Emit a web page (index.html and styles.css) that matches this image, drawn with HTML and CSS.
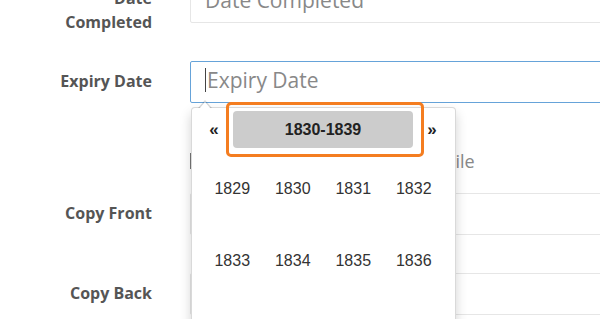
FILE: index.html
```html
<!DOCTYPE html>
<html lang="en">
<head>
  <meta charset="UTF-8">
  <meta name="viewport" content="width=device-width, initial-scale=1.0">
  <title>Expiry date picker</title>
  <link rel="stylesheet" href="styles.css">
</head>
<body>
<form class="form">
  <div class="row">
    <label class="label two-line">Date<br>Completed</label>
    <div class="field"><span class="ph">Date Completed</span></div>
  </div>
  <div class="row">
    <label class="label">Expiry Date</label>
    <div class="field focus">
      <span class="caret"></span><span class="ph">Expiry Date</span>
      <div class="picker">
        <div class="head">
          <span class="nav">&laquo;</span>
          <span class="switch">1830-1839</span>
          <span class="nav">&raquo;</span>
        </div>
        <div class="years">
          <span>1829</span><span>1830</span><span>1831</span><span>1832</span>
          <span>1833</span><span>1834</span><span>1835</span><span>1836</span>
        </div>
      </div>
    </div>
  </div>
  <div class="row file-row">
    <span></span>
    <div class="file"><span class="file-btn"></span><span class="file-text">Upload File</span></div>
  </div>
  <div class="row">
    <label class="label">Copy Front</label>
    <div class="field"></div>
  </div>
  <div class="row">
    <label class="label">Copy Back</label>
    <div class="field"></div>
  </div>
</form>
</body>
</html>
```

FILE: styles.css
```css
html,body{
  margin: 0;
  background: #fff;
  overflow: hidden;
  height: 319px;
}
.form{
  width: 760px;
  padding-top: 1px;
  margin-top: -20px;
  font-family: "Open Sans", "Liberation Sans", sans-serif;
}
.row{
  display: grid;
  grid-template-columns: 152px 1fr;
  grid-template-rows: 42px;
  column-gap: 38px;
  margin-bottom: 38px;
}
.label{
  text-align: right;
  font-weight: bold;
  font-size: 16px;
  line-height: 24px;
  color: #555;
  padding-top: 8px;
  white-space: nowrap;
}
.two-line{
  padding-top: 5px;
}
.field{
  position: relative;
  height: 42px;
  box-sizing: border-box;
  border: 1px solid #e6e6e6;
  border-radius: 2px;
  padding: 0 14px;
  display: flex;
  align-items: center;
  font-size: 21px;
  color: #888;
}
.field.focus{
  border-color: #66a3d9;
}
.ph{
  margin-top: -4px;
}
.caret{
  width: 1px;
  height: 24px;
  background: #444;
  margin-right: 1px;
  margin-top: -4px;
}
.file-row{
  grid-template-rows: 52px;
  margin-bottom: 0;
}
.file{
  display: flex;
  align-items: center;
  padding-top: 10px;
  height: 20px;
  font-size: 18px;
  color: #888;
}
.file-btn{
  width: 1px;
  height: 16px;
  background: #777;
  margin-right: 190px;
}
/* dropdown */
.picker{
  position: absolute;
  left: 0;
  top: 45px;
  width: 265px;
  height: 240px;
  box-sizing: border-box;
  background: #fff;
  border: 1px solid rgba(0,0,0,.15);
  border-radius: 4px;
  box-shadow: 0 6px 12px rgba(0,0,0,.18);
  padding: 3px 11px 0 10px;
  font-family: "Liberation Sans", Arial, sans-serif;
  color: #333;
  z-index: 2;
}
.picker::before{
  content: "";
  position: absolute;
  left: 6px;
  top: -8px;
  border-left: 7px solid transparent;
  border-right: 7px solid transparent;
  border-bottom: 8px solid rgba(0,0,0,.15);
}
.picker::after{
  content: "";
  position: absolute;
  left: 7px;
  top: -6px;
  border-left: 6px solid transparent;
  border-right: 6px solid transparent;
  border-bottom: 7px solid #fff;
}
.head{
  display: flex;
  align-items: center;
  gap: 7px;
  height: 37px;
  font-weight: bold;
  font-size: 16px;
}
.nav{
  width: 24px;
  text-align: center;
  font-size: 17px;
  color: #222;
}
.switch{
  position: relative;
  width: 180px;
  height: 37px;
  line-height: 37px;
  text-align: center;
  background: #ccc;
  border-radius: 4px;
  color: #222;
}
.switch::after{
  content: "";
  position: absolute;
  left: -7px;
  right: -11px;
  top: -9px;
  bottom: -9px;
  border: 3px solid #f47d20;
  border-radius: 5px;
  pointer-events: none;
}
.years{
  display: grid;
  grid-template-columns: repeat(4, 60.5px);
  grid-auto-rows: 72px;
  margin-top: 5px;
  font-size: 16px;
}
.years span{
  display: flex;
  align-items: center;
  justify-content: center;
}
```
